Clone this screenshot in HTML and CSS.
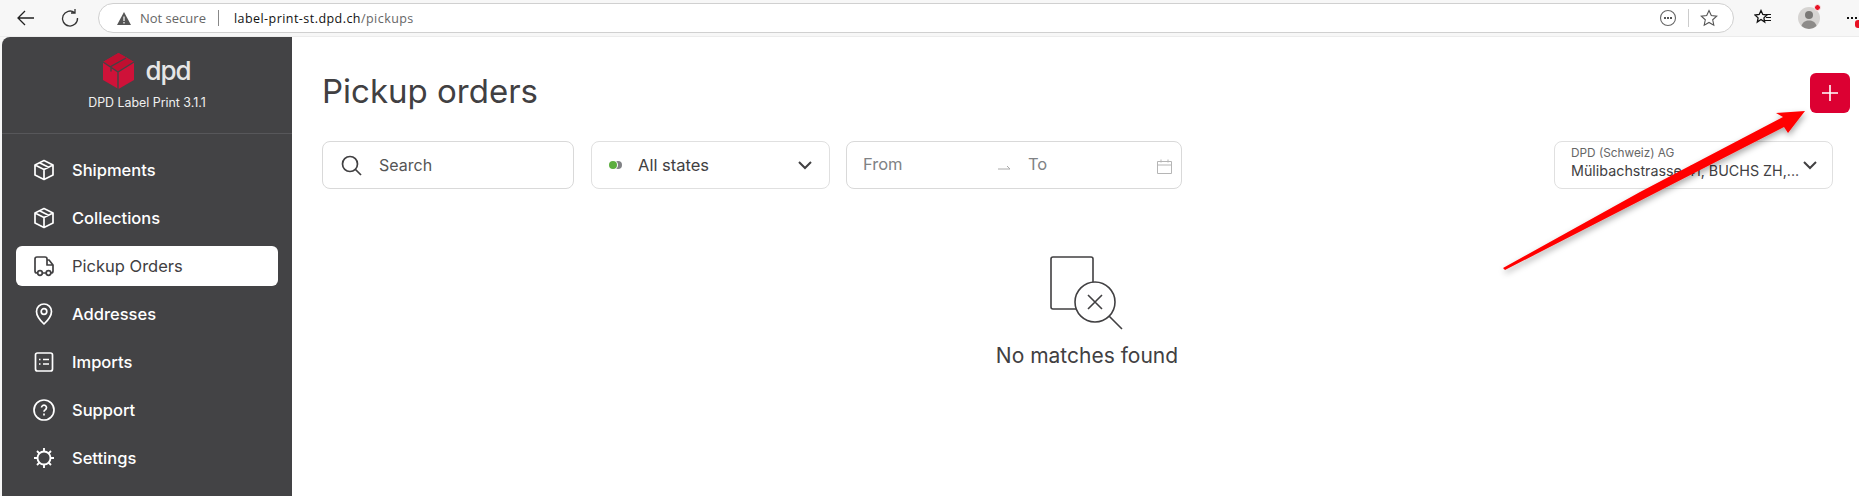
FILE: index.html
```html
<!DOCTYPE html>
<html lang="en">
<head>
<meta charset="utf-8">
<title>Pickup orders</title>
<link rel="stylesheet" href="styles.css">
</head>
<body>
<header class="browser">
  <svg class="b-back" width="20" height="20" viewBox="0 0 20 20"><path d="M18 10H2M9 3l-7 7 7 7" fill="none" stroke="#222" stroke-width="1.3"/></svg>
  <svg class="b-reload" width="20" height="20" viewBox="0 0 20 20"><path d="M14.500 4.500A7.500 7.500 0 1 0 17.500 10M15 1v4h-4" fill="none" stroke="#333" stroke-width="1.3"/></svg>
  <div class="pill">
    <svg class="warn" width="14" height="13" viewBox="0 0 14 13"><path d="M7 0l7 13H0z" fill="#555"/><path d="M7 4.500v4.500M7 10v1.500" stroke="#fff" stroke-width="1.200"/></svg>
    <span class="ns">Not secure</span>
    <span class="sep"></span>
    <span class="url">label-print-st.dpd.ch<span class="path">/pickups</span></span>
    <svg class="more" width="18" height="18" viewBox="0 0 18 18"><circle cx="9" cy="9" r="7.500" fill="none" stroke="#666" stroke-width="1.100"/><path d="M5 8h2v2H5zM8 8h2v2H8zM11 8h2v2h-2z" fill="#555"/></svg>
    <span class="sep2"></span>
    <svg class="star" width="18" height="18" viewBox="0 0 18 18"><path d="M9 1.500l2.300 5 5.400.6-4 3.700 1.100 5.400L9 13.500l-4.800 2.700 1.100-5.400-4-3.700 5.400-.6z" fill="none" stroke="#555" stroke-width="1.100"/></svg>
  </div>
  <svg class="fav" width="18" height="18" viewBox="0 0 18 18"><path d="M7 1.500l1.800 4 4.200.5-3.100 2.900.8 4.200L7 10.500l-3.700 2.600.8-4.200L1 6l4.200-.5z" fill="none" stroke="#111" stroke-width="1.300"/><path d="M12 5.500h5M12 8.500h5M11 11.500h6" stroke="#111" stroke-width="1.100"/></svg>
  <div class="avatar">
    <svg width="22" height="22" viewBox="0 0 22 22"><circle cx="11" cy="11" r="11" fill="#d6d4d2"/><circle cx="11" cy="8" r="4" fill="#7a7876"/><path d="M3.500 19c1-4 4-5.500 7.500-5.500s6.500 1.500 7.500 5.500a11 11 0 0 1-15 0z" fill="#8d8b89"/></svg>
    <i class="adot"></i>
  </div>
  <div class="dots"><i></i><i></i><i></i><b></b></div>
</header>

<div class="app">
  <aside class="side">
    <div class="brand">
      <div class="logo">
        <svg width="31" height="36" viewBox="0 0 31 36"><path d="M15.500 0L31 9v18l-15.500 9L0 27V9z" fill="#cf1239"/><path d="M15.500 0L31 9l-15.500 10L0 9z" fill="#c00f30"/><path d="M0 9l15 10v17M31 9L15 19M23 5L8 13.500v5" fill="none" stroke="#434345" stroke-width="1.400"/></svg>
        <span class="dpd">dpd</span>
      </div>
      <div class="ver">DPD Label Print 3.1.1</div>
    </div>
    <nav class="nav">
      <a class="item"><svg class="ic" width="24" height="24" viewBox="0 0 24 24"><path d="M12 2.500l9 4.500v10l-9 4.500L3 17V7zM3 7l9 4.500L21 7M12 11.500v10M7.500 4.800l9 4.500" fill="none" stroke="currentColor" stroke-width="1.700" stroke-linejoin="round"/></svg>Shipments</a>
      <a class="item"><svg class="ic" width="24" height="24" viewBox="0 0 24 24"><path d="M12 2.500l9 4.500v10l-9 4.500L3 17V7zM3 7l9 4.500L21 7M12 11.500v10M7.500 4.800l9 4.500" fill="none" stroke="currentColor" stroke-width="1.700" stroke-linejoin="round"/></svg>Collections</a>
      <a class="item on"><svg class="ic" width="24" height="24" viewBox="0 0 24 24"><path d="M6 19H5a2 2 0 0 1-2-2V5a2 2 0 0 1 2-2h8a2 2 0 0 1 2 2v1h2l4 5v6a2 2 0 0 1-2 2M10 19h4M15 6v5h6" fill="none" stroke="currentColor" stroke-width="1.700" stroke-linejoin="round"/><circle cx="8" cy="19" r="2.300" fill="none" stroke="currentColor" stroke-width="1.700"/><circle cx="16.500" cy="19" r="2.300" fill="none" stroke="currentColor" stroke-width="1.700"/></svg>Pickup Orders</a>
      <a class="item"><svg class="ic" width="24" height="24" viewBox="0 0 24 24"><path d="M12 22s-7.500-7-7.500-12.500a7.500 7.500 0 0 1 15 0C19.500 15 12 22 12 22z" fill="none" stroke="currentColor" stroke-width="1.700" stroke-linejoin="round"/><circle cx="12" cy="9.500" r="2.800" fill="none" stroke="currentColor" stroke-width="1.700"/></svg>Addresses</a>
      <a class="item"><svg class="ic" width="24" height="24" viewBox="0 0 24 24"><rect x="3.500" y="3" width="17" height="18" rx="2" fill="none" stroke="currentColor" stroke-width="1.700"/><path d="M7 9.500h1.500M7 14h1.500M11 9.500h6M11 14h6" stroke="currentColor" stroke-width="1.700"/></svg>Imports</a>
      <a class="item"><svg class="ic" width="24" height="24" viewBox="0 0 24 24"><circle cx="12" cy="12" r="10" fill="none" stroke="currentColor" stroke-width="1.700"/><path d="M9.500 9.500a2.500 2.500 0 1 1 3.800 2.200c-.9.500-1.300 1-1.300 2M12 15.500v2" fill="none" stroke="currentColor" stroke-width="1.700"/></svg>Support</a>
      <a class="item"><svg class="ic" width="24" height="24" viewBox="0 0 24 24"><circle cx="12" cy="12" r="6.500" fill="none" stroke="currentColor" stroke-width="1.900"/><path d="M12 2v3.500M12 18.500V22M2 12h3.500M18.500 12H22M5 5l2.500 2.500M16.500 16.500L19 19M19 5l-2.500 2.500M7.500 16.500L5 19" stroke="currentColor" stroke-width="1.900"/></svg>Settings</a>
    </nav>
  </aside>

  <main class="main">
    <div class="head">
      <h1 class="title">Pickup orders</h1>
      <button class="add"><svg width="18" height="18" viewBox="0 0 18 18"><path d="M9 1v16M1 9h16" stroke="#fff" stroke-width="1.600"/></svg></button>
    </div>
    <div class="filters">
      <div class="box search">
        <svg width="21" height="21" viewBox="0 0 21 21"><circle cx="9" cy="9" r="7.500" fill="none" stroke="#414042" stroke-width="1.700"/><path d="M14.500 14.500l5.500 5.500" stroke="#414042" stroke-width="1.700"/></svg>
        <span>Search</span>
      </div>
      <div class="box states">
        <span class="pair"><i class="d2"></i><i class="d1"></i></span>
        <span class="st">All states</span>
        <svg class="chev" width="16" height="10" viewBox="0 0 16 10"><path d="M2 2l6 6 6-6" fill="none" stroke="#414042" stroke-width="2"/></svg>
      </div>
      <div class="box date">
        <span class="from">From</span>
        <svg class="to-arrow" width="13" height="6" viewBox="0 0 13 6"><path d="M0 5h12L9 2" fill="none" stroke="#aaa" stroke-width="1"/></svg>
        <span class="to">To</span>
        <svg class="cal" width="15" height="15" viewBox="0 0 15 15"><path d="M.5 2.500h14v12H.5zM.5 6h14M4 .500v3M11 .500v3" fill="none" stroke="#b5b5b5" stroke-width="1"/></svg>
      </div>
      <div class="box company">
        <div class="co-text">
          <div class="co1">DPD (Schweiz) AG</div>
          <div class="co2">Mülibachstrasse 41, BUCHS ZH,...</div>
        </div>
        <svg class="chev" width="16" height="10" viewBox="0 0 16 10"><path d="M2 2l6 6 6-6" fill="none" stroke="#414042" stroke-width="2"/></svg>
      </div>
    </div>
    <div class="empty">
      <svg width="74" height="74" viewBox="0 0 74 74"><path d="M26 53H3a2 2 0 0 1-2-2V3a2 2 0 0 1 2-2h38a2 2 0 0 1 2 2v23" fill="none" stroke="#414042" stroke-width="1.600"/><circle cx="45" cy="46" r="20" fill="none" stroke="#414042" stroke-width="1.600"/><path d="M38 39l14 14M52 39L38 53M59 60l13 13" stroke="#414042" stroke-width="1.600"/></svg>
      <p>No matches found</p>
    </div>
  </main>
</div>

<svg class="arrow" width="1859" height="496" viewBox="0 0 1859 496"><defs><filter id="sh" x="-10%" y="-10%" width="120%" height="130%"><feDropShadow dx="1" dy="3" stdDeviation="3" flood-color="#000" flood-opacity=".35"/></filter></defs><polygon points="1503,268 1640,192 1783,117 1776,113 1805,111 1788,133 1784,127 1505,270" fill="#f00" filter="url(#sh)"/></svg>
</body>
</html>
```
FILE: styles.css
```css
* { box-sizing: border-box; }
html, body { margin: 0; height: 496px; overflow: hidden; background: #f7f7f7; }
body { position: relative; font-family: "Inter", "Noto Sans", sans-serif; color: #414042; }

.browser { height: 37px; display: flex; align-items: center; padding: 0 0 0 16px; background: #f7f7f7; border-bottom: 1px solid #ececec; font-family: "Open Sans", sans-serif; }
.b-reload { margin-left: 24px; }
.pill { margin-left: 18px; width: 1636px; height: 30px; border: 1px solid #d0d0d0; border-radius: 15px; background: #fff; display: flex; align-items: center; padding: 0 15px 0 18px; font-size: 13px; }
.warn { flex: none; }
.ns { margin-left: 9px; color: #666; }
.sep { width: 1px; height: 16px; background: #888; margin: 0 15px 0 12px; }
.url { color: #111; font-size: 12.5px; letter-spacing: .45px; }
.path { color: #666; }
.more { margin-left: auto; }
.sep2 { width: 1px; height: 18px; background: #ccc; margin: 0 11px 0 11px; }
.fav { margin-left: 20px; }
.avatar { position: relative; width: 22px; height: 22px; margin-left: 26px; }
.avatar svg { display: block; }
.adot { position: absolute; top: -3px; right: -1px; border-radius: 50%; background: #e81123; border: 1px solid #f7f7f7; box-sizing: content-box; width: 5px; height: 5px; }
.dots { position: relative; margin-left: 27px; flex: 1; height: 3px; display: flex; gap: 2px; }
.dots i { width: 2px; height: 2px; background: #111; display: block; }
.dots b { position: absolute; left: 8px; top: 3px; width: 6px; height: 8px; border-radius: 3px; background: #e81123; }

.app { display: flex; height: 459px; padding-left: 2px; }
.side { width: 290px; flex: none; background: #434345; color: #fff; border-radius: 8px 0 0 0; }
.brand { height: 97px; border-bottom: 1px solid #57575a; display: flex; flex-direction: column; align-items: center; padding-top: 16px; }
.logo { display: flex; align-items: center; gap: 11px; height: 36px; }
.dpd { font-size: 26px; font-weight: 500; color: #e6e6e6; letter-spacing: -1px; line-height: 30px; }
.ver { margin-top: 6px; font-size: 12.400px; line-height: 16px; color: #f0f0f0; }
.nav { padding: 16px 14px 0; display: flex; flex-direction: column; gap: 8px; }
.item { display: flex; align-items: center; height: 40px; padding-left: 16px; border-radius: 6px; font-size: 16.500px; font-weight: 500; color: #fff; }
.item.on { background: #fff; color: #414042; font-weight: 400; }
.ic { margin-right: 16px; flex: none; }

.main { flex: 1; min-width: 0; background: #fff; padding: 36px 9px 0 30px; }
.head { display: flex; justify-content: space-between; align-items: center; height: 40px; }
.title { margin: -4px 0 0; font-size: 33px; font-weight: 400; line-height: 40px; }
.add { width: 40px; height: 40px; border: 0; border-radius: 6px; padding: 0; background: #dc0032; display: flex; align-items: center; justify-content: center; }
.filters { display: flex; gap: 16px; margin-top: 28px; padding-right: 17px; }
.box { height: 48px; border: 1px solid #e0e0e0; border-radius: 8px; display: flex; align-items: center; background: #fff; font-size: 16.500px; }
.search { width: 252px; padding-left: 18px; gap: 17px; border-color: #d9d9d9; color: #555; margin-right: 1px; font-size: 16px; }
.states { width: 239px; padding: 0 16px 0 17px; }
.pair { position: relative; width: 13px; height: 8px; }
.pair i { position: absolute; top: 0; width: 8px; height: 8px; border-radius: 50%; }
.d1 { left: 0; background: #5cae3f; box-shadow: 0 0 0 1px #fff; }
.d2 { right: 0; background: #808285; }
.st { margin-left: 16px; }
.chev { margin-left: auto; flex: none; }
.date { width: 336px; padding: 0 9px 0 16px; color: #808285; border-color: #d9d9d9; font-size: 16.500px; }
.from { width: 135px; margin-top: -2px; }
.to-arrow { margin-top: 4px; }
.to { margin-left: 17px; margin-top: -2px; }
.cal { margin-left: auto; margin-top: 2px; }
.company { width: 279px; margin-left: auto; padding: 0 14px 0 16px; overflow: hidden; }
.co-text { min-width: 0; margin-top: -4px; }
.co1 { font-size: 11.800px; line-height: 16px; color: #666; }
.co2 { font-size: 14.300px; line-height: 20px; white-space: nowrap; }
.empty { display: flex; flex-direction: column; align-items: center; margin-top: 67px; padding-left: 2px; }
.empty svg { display: block; }
.empty p { margin: 12px 0 0; font-size: 21px; line-height: 28px; }

.arrow { position: absolute; left: 0; top: 0; pointer-events: none; }
```
